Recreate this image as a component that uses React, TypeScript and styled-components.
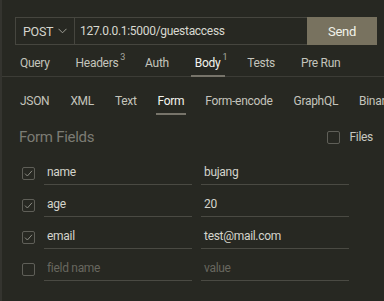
import React from 'react';
import styled, { createGlobalStyle } from 'styled-components';

const GlobalStyle = createGlobalStyle`
  html, body {
    margin: 0;
    padding: 0;
    background: #272822;
  }
  body {
    font-family: Roboto, "Noto Sans", sans-serif;
    letter-spacing: -0.3px;
    color: #cfcfc7;
  }
`;

const Root = styled.div`
  width: 384px;
  height: 301px;
  overflow: hidden;
  background: #272822;
  border-left: 2px solid #34342f;
  box-sizing: border-box;
  display: flex;
  flex-direction: column;
`;

const UrlBar = styled.div`
  display: flex;
  height: 28px;
  margin: 17px 7px 0 13px;
  border: 1px solid #46463f;
  box-sizing: border-box;
`;

const MethodSelect = styled.div`
  width: 59px;
  display: flex;
  align-items: center;
  justify-content: space-between;
  padding: 0 7px 0 7px;
  box-sizing: border-box;
  border-right: 1px solid #46463f;
  font-size: 12.5px;
  color: #d4d4cc;
`;

const UrlText = styled.div`
  flex: 1;
  display: flex;
  align-items: center;
  padding-left: 5px;
  font-size: 12px;
  color: #d8d8d0;
`;

const SendButton = styled.div`
  width: 70px;
  margin: -1px -1px -1px 0;
  background: #78725f;
  color: #f2f2ea;
  font-size: 13px;
  display: flex;
  align-items: center;
  justify-content: center;
`;

const TabBar = styled.div<{ $line?: boolean }>`
  display: flex;
  align-items: stretch;
  box-sizing: border-box;
  height: ${(p) => (p.$line ? '32px' : '37px')};
  padding-top: ${(p) => (p.$line ? '6px' : '12px')};
  border-bottom: ${(p) => (p.$line ? '1px solid #3c3c36' : 'none')};
  padding-left: ${(p) => (p.$line ? '14px' : '16px')};
  gap: ${(p) => (p.$line ? '18px' : '17px')};
  white-space: nowrap;
`;

const Tab = styled.div<{ $active?: boolean; $pad: number }>`
  display: flex;
  align-items: center;
  padding: 0 ${(p) => p.$pad}px;
  font-size: 12px;
  color: ${(p) => (p.$active ? '#f4f4ee' : '#c4c4bc')};
  border-bottom: 2px solid ${(p) => (p.$active ? '#77746a' : 'transparent')};
  margin-bottom: -1px;
  sup {
    font-size: 9px;
    color: #a8a8a0;
    margin-left: 2px;
    margin-right: -6px;
    align-self: flex-start;
    margin-top: 1px;
  }
`;

const SectionHeader = styled.div`
  display: flex;
  align-items: center;
  justify-content: space-between;
  padding: 12px 11px 0 17px;
  height: 22px;
`;

const SectionTitle = styled.div`
  font-size: 15px;
  color: #7c7c74;
`;

const FilesToggle = styled.label`
  display: flex;
  align-items: center;
  gap: 9px;
  font-size: 12px;
  color: #c8c8c0;
`;

const Box = styled.span`
  width: 13px;
  height: 13px;
  border: 1px solid #5f5f58;
  border-radius: 2px;
  box-sizing: border-box;
  display: inline-flex;
  align-items: center;
  justify-content: center;
  flex: none;
`;

const Rows = styled.div`
  display: flex;
  flex-direction: column;
  padding: 14px 0 0 20px;
  gap: 9px;
`;

const Row = styled.div`
  display: flex;
  align-items: center;
  height: 23px;
`;

const Field = styled.div<{ $placeholder?: boolean }>`
  width: 148px;
  height: 23px;
  margin-left: 9px;
  box-sizing: border-box;
  border-bottom: 1px solid #4a4a43;
  display: flex;
  align-items: center;
  padding: 0 3px 2px;
  font-size: 12px;
  color: ${(p) => (p.$placeholder ? '#67675f' : '#d4d4cc')};
`;

const Check = () => (
  <svg width="11" height="11" viewBox="0 0 11 11">
    <path d="M2 5.6 L4.4 8 L9 2.8" fill="none" stroke="#8a8a82" strokeWidth="1" />
  </svg>
);

const Chevron = () => (
  <svg width="9" height="6" viewBox="0 0 9 6">
    <path d="M0.5 0.8 L4.5 4.8 L8.5 0.8" fill="none" stroke="#a0a098" strokeWidth="1" />
  </svg>
);

const fields = [
  { name: 'name', value: 'bujang' },
  { name: 'age', value: '20' },
  { name: 'email', value: 'test@mail.com' },
];

export default function App() {
  return (
    <Root>
      <GlobalStyle />
      <UrlBar>
        <MethodSelect>
          POST
          <Chevron />
        </MethodSelect>
        <UrlText>127.0.0.1:5000/guestaccess</UrlText>
        <SendButton>Send</SendButton>
      </UrlBar>
      <TabBar $line>
        <Tab $pad={4}>Query</Tab>
        <Tab $pad={4}>
          Headers<sup>3</sup>
        </Tab>
        <Tab $pad={4}>Auth</Tab>
        <Tab $pad={4} $active>
          Body<sup>1</sup>
        </Tab>
        <Tab $pad={4}>Tests</Tab>
        <Tab $pad={4}>Pre Run</Tab>
      </TabBar>
      <TabBar>
        <Tab $pad={2}>JSON</Tab>
        <Tab $pad={2}>XML</Tab>
        <Tab $pad={2}>Text</Tab>
        <Tab $pad={2} $active>
          Form
        </Tab>
        <Tab $pad={2}>Form-encode</Tab>
        <Tab $pad={2}>GraphQL</Tab>
        <Tab $pad={2}>Binary</Tab>
      </TabBar>
      <SectionHeader>
        <SectionTitle>Form Fields</SectionTitle>
        <FilesToggle>
          <Box />
          Files
        </FilesToggle>
      </SectionHeader>
      <Rows>
        {fields.map((f) => (
          <Row key={f.name}>
            <Box>
              <Check />
            </Box>
            <Field>{f.name}</Field>
            <Field>{f.value}</Field>
          </Row>
        ))}
        <Row>
          <Box />
          <Field $placeholder>field name</Field>
          <Field $placeholder>value</Field>
        </Row>
      </Rows>
    </Root>
  );
}
